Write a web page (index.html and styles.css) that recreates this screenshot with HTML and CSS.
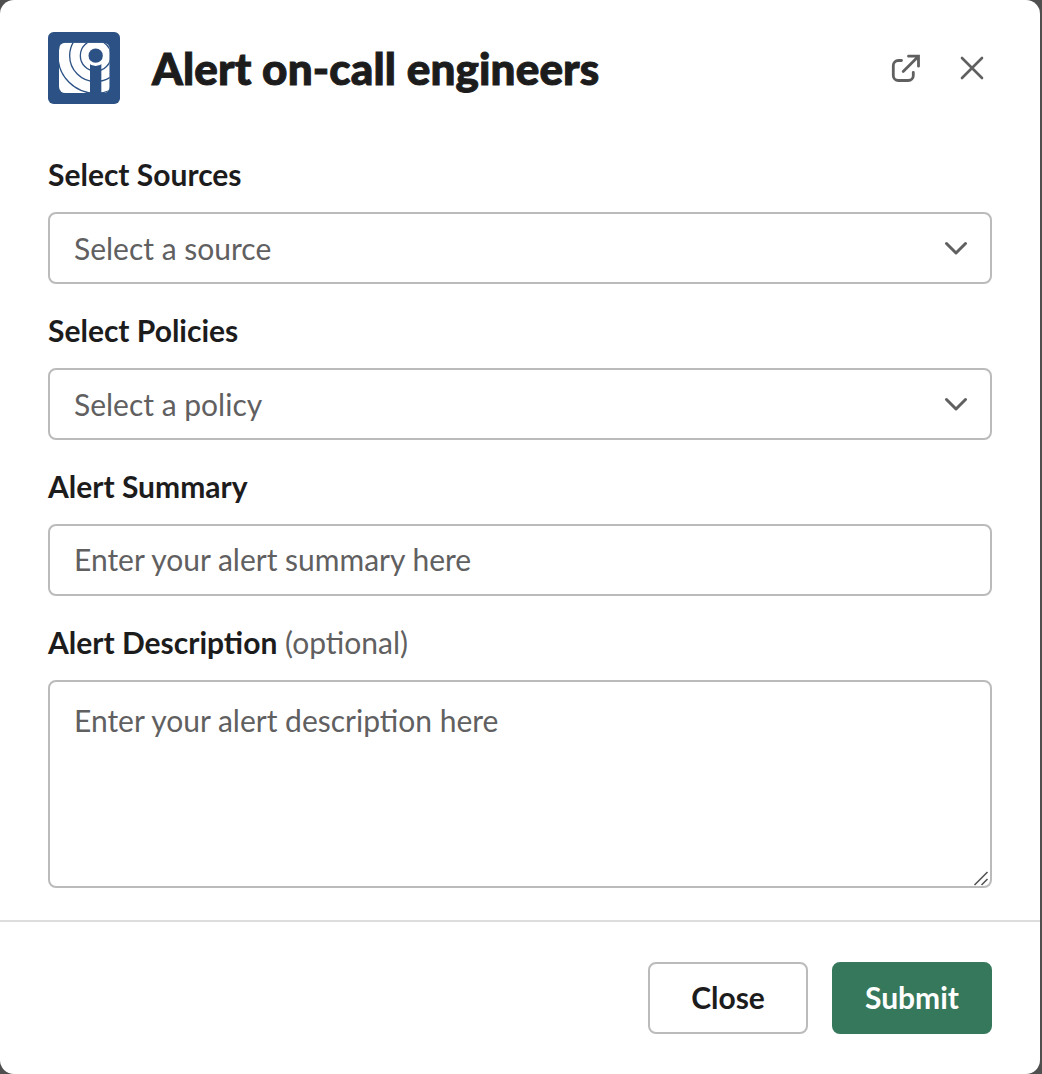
FILE: index.html
```html
<!DOCTYPE html>
<html lang="en">
<head>
<meta charset="utf-8">
<title>Alert on-call engineers</title>
<link rel="stylesheet" href="styles.css">
</head>
<body>
<main class="modal">
  <header class="header">
    <svg class="logo" viewBox="0 0 216 216" aria-hidden="true">
      <defs><clipPath id="tile"><rect x="33" y="32" width="152" height="151" rx="19"/></clipPath></defs>
      <rect width="216" height="216" rx="17" fill="#2c5285"/>
      <g clip-path="url(#tile)">
        <rect x="33" y="32" width="152" height="151" fill="#fff"/>
        <g fill="none" stroke="#2c5285" stroke-width="4">
          <circle cx="143" cy="71" r="46"/>
          <circle cx="143" cy="71" r="78"/>
          <circle cx="143" cy="71" r="113"/>
        </g>
        <path d="M126 95h34v90h-34z" fill="#2c5285"/>
        <circle cx="143" cy="71" r="31" fill="#fff"/>
        <circle cx="143" cy="71" r="21.5" fill="#2c5285"/>
      </g>
    </svg>
    <h1 class="title">Alert on-call engineers</h1>
    <button class="icon-button popout" aria-label="Open in new window">
      <svg viewBox="0 0 40 40"><path d="M15.500 12.500h-3.200a5 5 0 0 0-5 5v10a5 5 0 0 0 5 5h10a5 5 0 0 0 5-5v-3.200M17.200 23.500 32 8.700M22.500 8.200h10v10"/></svg>
    </button>
    <button class="icon-button" aria-label="Close dialog">
      <svg viewBox="0 0 40 40"><path d="m10 10 20 20M30 10 10 30"/></svg>
    </button>
  </header>
  <section class="fields">
    <div class="field">
      <div class="label">Select Sources</div>
      <div class="control select"><span>Select a source</span>
        <svg class="chevron" viewBox="0 0 24 14"><path d="m2.500 2.500 9.500 9.500 9.500-9.500"/></svg></div>
    </div>
    <div class="field">
      <div class="label">Select Policies</div>
      <div class="control select"><span>Select a policy</span>
        <svg class="chevron" viewBox="0 0 24 14"><path d="m2.500 2.500 9.500 9.500 9.500-9.500"/></svg></div>
    </div>
    <div class="field">
      <div class="label">Alert Summary</div>
      <div class="control input">Enter your alert summary here</div>
    </div>
    <div class="field">
      <div class="label">Alert Description <span class="optional">(optional)</span></div>
      <div class="control area">Enter your alert description here
        <svg class="grip" viewBox="0 0 16 16"><path d="M1.500 15 14.500 2M8.500 15 14.500 9"/></svg></div>
    </div>
  </section>
  <footer class="footer">
    <button class="button">Close</button>
    <button class="button primary">Submit</button>
  </footer>
</main>
</body>
</html>
```
FILE: styles.css
```css
* { box-sizing: border-box; }
body {
  margin: 0;
  background: #4f4f4f;
  font-family: Lato, sans-serif;
  font-size: 30px;
  color: #1d1c1d;
}
.modal {
  display: flex;
  flex-direction: column;
  width: 1040px;
  height: 1074px;
  background: #fff;
  border-radius: 14px;
}
.header {
  display: flex;
  align-items: center;
  padding: 32px 48px 0;
  height: 104px;
}
.logo { width: 72px; height: 72px; margin-right: 32px; }
.title {
  flex: 1;
  margin: 0;
  font-size: 44px;
  font-weight: 900;
  line-height: 60px;
  letter-spacing: 0.14px;
  -webkit-text-stroke: 1px #1d1c1d;
}
.icon-button {
  width: 40px;
  height: 40px;
  padding: 0;
  border: 0;
  background: none;
}
.icon-button + .icon-button { margin-left: 26px; }
.icon-button svg {
  display: block;
  fill: none;
  stroke: #616061;
  stroke-width: 2.6;
  stroke-linecap: round;
}
.popout svg { stroke-width: 2.8; }
.fields {
  display: flex;
  flex-direction: column;
  gap: 24px;
  padding: 48px 48px 32px;
}
.label {
  height: 44px;
  margin-bottom: 16px;
  font-weight: 700;
  line-height: 44px;
}
.optional { font-weight: 400; color: #616061; margin-left: 0.5px; }
.control {
  position: relative;
  height: 72px;
  padding: 0 24px;
  border: 2px solid #bbb;
  border-radius: 8px;
  line-height: 68px;
  color: #616061;
}
.select {
  display: flex;
  align-items: center;
  justify-content: space-between;
  padding-right: 22px;
}
.chevron {
  width: 24px;
  height: 14px;
  fill: none;
  stroke: #616061;
  stroke-width: 3;
  stroke-linecap: round;
  stroke-linejoin: round;
}
.input { line-height: 66px; }
.area { height: 208px; padding-top: 16px; line-height: 44px; }
.grip {
  position: absolute;
  right: 1px;
  bottom: 0;
  width: 16px;
  height: 16px;
  fill: none;
  stroke: #555;
  stroke-width: 1.6;
}
.footer {
  display: flex;
  flex: 1;
  justify-content: flex-end;
  gap: 24px;
  padding: 40px 48px;
  border-top: 2px solid #ddd;
}
.button {
  width: 160px;
  height: 72px;
  padding: 0 6px 2px;
  border: 2px solid #bbb;
  border-radius: 8px;
  background: #fff;
  color: #1d1c1d;
  font: 700 30px Lato, sans-serif;
}
.primary { border-color: #35785b; background: #35785b; color: #fff; }
```
